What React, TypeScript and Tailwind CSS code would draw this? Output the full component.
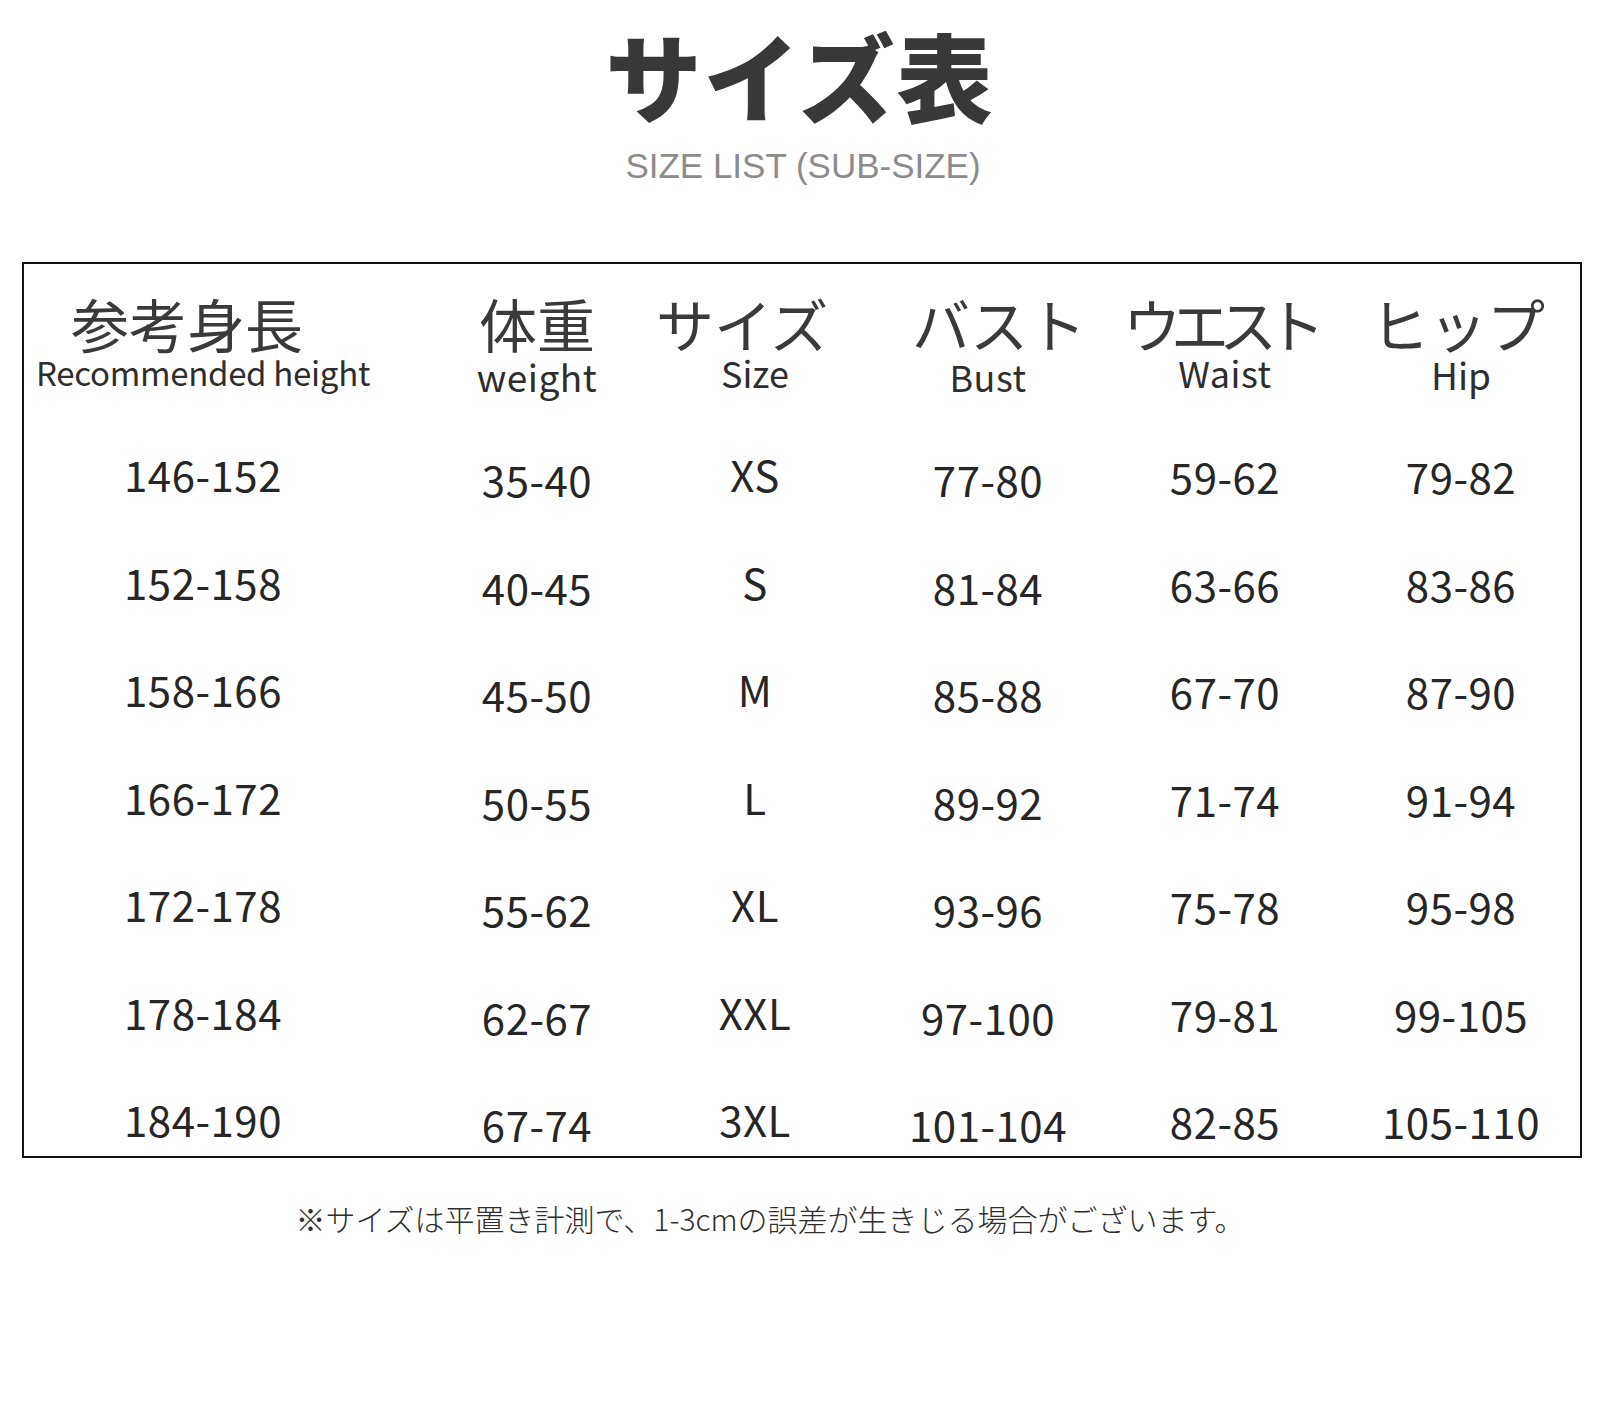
import React from 'react';

const rows = [
  ['146-152', '35-40', 'XS', '77-80', '59-62', '79-82'],
  ['152-158', '40-45', 'S', '81-84', '63-66', '83-86'],
  ['158-166', '45-50', 'M', '85-88', '67-70', '87-90'],
  ['166-172', '50-55', 'L', '89-92', '71-74', '91-94'],
  ['172-178', '55-62', 'XL', '93-96', '75-78', '95-98'],
  ['178-184', '62-67', 'XXL', '97-100', '79-81', '99-105'],
  ['184-190', '67-74', '3XL', '101-104', '82-85', '105-110'],
];

// per-column nudges so each value sits where the chart has it
const cellClass = [
  'pt-0',
  'pt-[10px]',
  'pt-0',
  'pt-[10px]',
  'pt-[4px]',
  'pt-[4px] pl-[50px]',
];

const headers = [
  { jp: '参考身長', en: 'Recommended height', jpClass: 'pr-[32px]', enClass: 'text-[33px] tracking-[-0.3px]' },
  { jp: '体重', en: 'weight', jpClass: '', enClass: 'text-[37px] tracking-[0.5px] mt-[4px]' },
  { jp: 'サイズ', en: 'Size', jpClass: 'pr-[26px]', enClass: 'text-[36px]' },
  { jp: 'バスト', en: 'Bust', jpClass: 'pl-[22px]', enClass: 'text-[36px] tracking-[0.5px] mt-[4px]' },
  { jp: 'ウエスト', en: 'Waist', jpClass: 'tracking-[-10px] pr-[12px]', enClass: 'text-[36px] tracking-[0.5px]' },
  { jp: 'ヒップ', en: 'Hip', jpClass: 'pl-[44px]', enClass: 'text-[37px] pl-[50px] mt-[2px]' },
];

const SizeChart: React.FC = () => {
  return (
    <div className="w-[1600px] h-[1403px] bg-white flex flex-col text-[#2e2e2e] font-['Noto_Sans_CJK_JP','Noto_Sans',sans-serif]">
      <div className="flex flex-col items-center pt-[18px]">
        <h1 className="text-[96px] leading-[112px] font-black tracking-[2px] text-[#383838]">サイズ表</h1>
        <p className="mt-[16px] pl-[6px] text-[35px] leading-[40px] text-[#8c8c8c] font-['Liberation_Sans',Arial,sans-serif]">
          SIZE LIST (SUB-SIZE)
        </p>
      </div>

      <div className="pl-[22px] mt-[76px]">
        <div className="w-[1560px] h-[896px] border-2 border-[#111] overflow-hidden">
          <div className="grid grid-cols-[358px_310px_126px_340px_134px_288px]">
            {headers.map((h) => (
              <div key={h.jp} className="h-[156px] flex flex-col items-center pt-[28px]">
                <div className={`text-[58px] leading-[62px] font-normal text-[#3a3a3a] whitespace-nowrap ${h.jpClass}`}>{h.jp}</div>
                <div className={`leading-[36px] whitespace-nowrap text-[#2e2e2e] ${h.enClass}`}>{h.en}</div>
              </div>
            ))}
            {rows.map((r) =>
              r.map((v, i) => (
                <div
                  key={r[0] + i}
                  className={`h-[107.5px] flex items-center justify-center text-[42px] tracking-[0.5px] text-[#262626] ${cellClass[i]}`}
                >
                  {v}
                </div>
              ))
            )}
          </div>
        </div>
      </div>

      <p className="mt-[40px] pr-[60px] text-center text-[30px] leading-[40px] text-[#2e2e2e] font-light">
        ※サイズは平置き計測で、1-3cmの誤差が生きじる場合がございます。
      </p>
    </div>
  );
};

export default function App() {
  return <SizeChart />;
}
